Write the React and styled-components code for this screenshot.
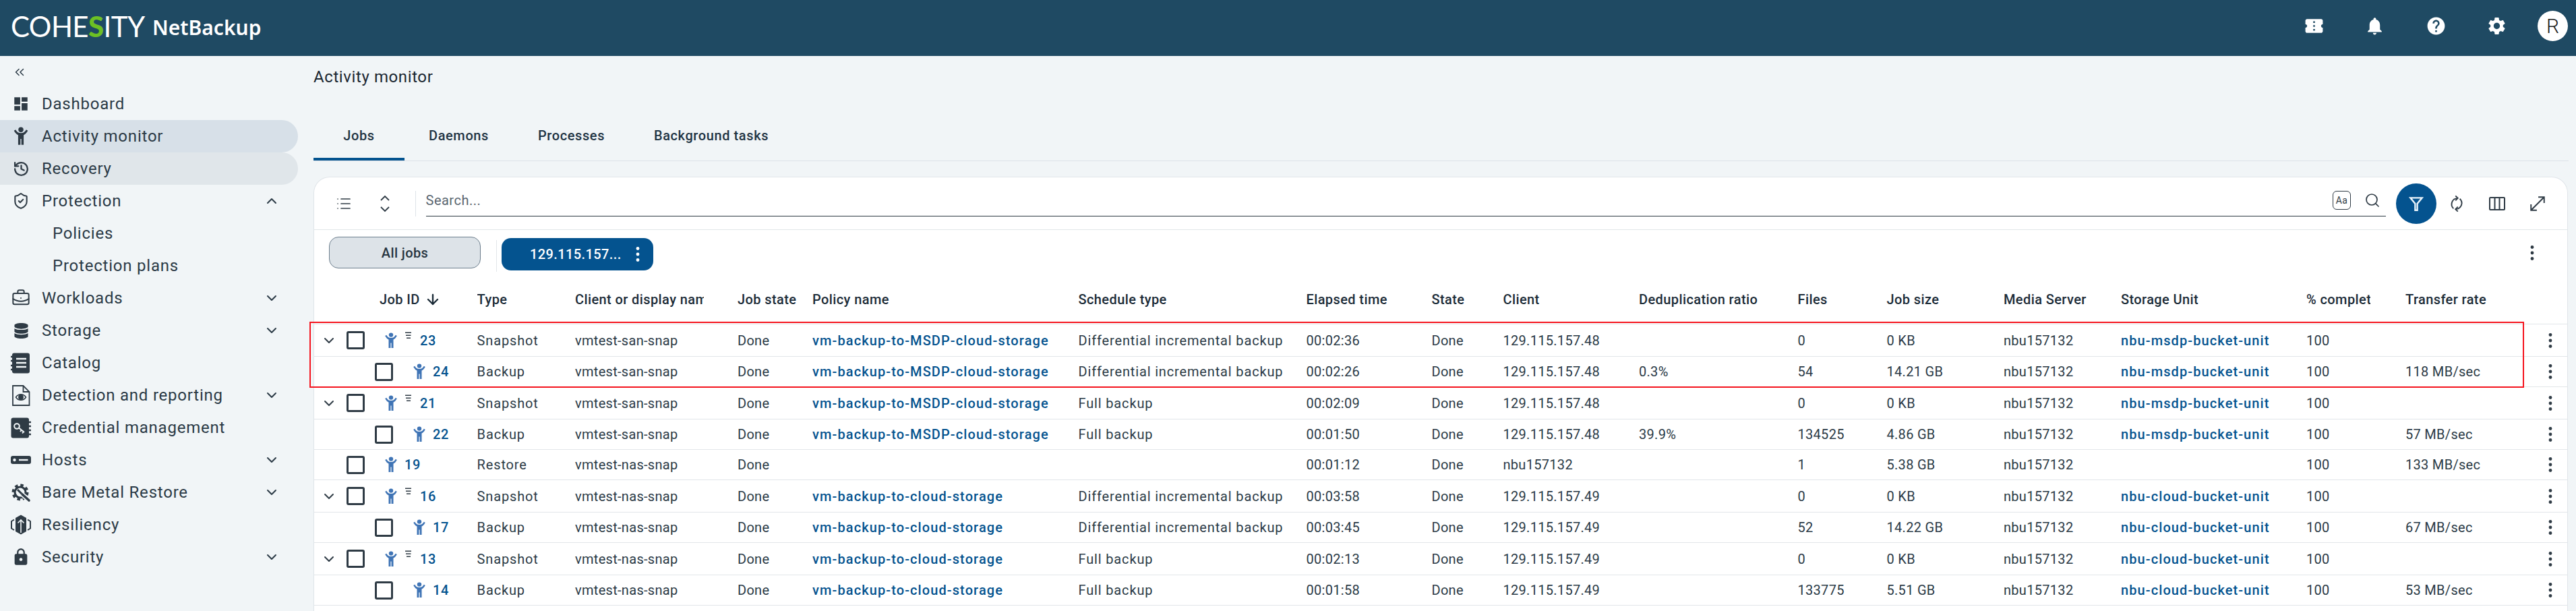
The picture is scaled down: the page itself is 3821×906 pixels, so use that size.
import React from 'react';
import styled, { createGlobalStyle } from 'styled-components';
import {
  ChevronDown, ChevronUp, ChevronsLeft, History, ShieldCheck, BriefcaseBusiness, ArrowDown, List, Search,
} from 'lucide-react';
import { MdConfirmationNumber, MdNotifications, MdHelp, MdSettings, MdDashboard, MdLock } from 'react-icons/md';
import { FaDatabase } from 'react-icons/fa';

const GlobalStyle = createGlobalStyle`
  html, body { margin: 0; padding: 0; height: 100%; overflow: hidden; }
  body { font-family: Roboto, "Liberation Sans", sans-serif; background: #f1f5f7; color: #2b3a46; }
  * { box-sizing: border-box; }
`;

const Page = styled.div`
  height: 100vh;
  display: flex;
  flex-direction: column;
  overflow: hidden;
  position: relative;
`;

// Top bar
const TopBar = styled.header`
  height: 83px;
  flex-shrink: 0;
  background: #1f4a63;
  display: flex;
  align-items: center;
  padding: 0 12px 6px 16px;
  color: #fff;
`;

const Brand = styled.div`
  font-family: Lato, Roboto, sans-serif;
  font-size: 42px;
  font-weight: 400;
  letter-spacing: -0.6px;
  line-height: 1;
  width: 210px;
  white-space: nowrap;
`;

const BrandS = styled.span`
  color: #6cc024;
  font-weight: 900;
`;

const Product = styled.div`
  font-family: "Noto Sans", sans-serif;
  font-size: 30px;
  font-weight: 600;
  white-space: nowrap;
  padding-top: 3px;
`;

const TopActions = styled.div`
  margin-left: auto;
  display: flex;
  align-items: center;
`;

const TopIcon = styled.div`
  width: 90.5px;
  display: flex;
  justify-content: center;
  align-items: center;
  font-size: 31px;
`;

const Avatar = styled.div`
  width: 45px;
  height: 45px;
  border-radius: 50%;
  background: #fff;
  color: #1b1b1b;
  font-size: 30px;
  font-weight: 300;
  display: flex;
  align-items: center;
  justify-content: center;
  margin-left: 15px;
`;

const Body = styled.div`
  flex: 1;
  display: flex;
  min-height: 0;
`;

// Sidebar
const Sidebar = styled.nav`
  width: 465px;
  flex-shrink: 0;
  padding-right: 23px;
`;

const CollapseRow = styled.div`
  height: 47px;
  display: flex;
  align-items: center;
  padding-left: 18px;
  color: #2b3a46;
`;

const NavRow = styled.div`
  height: 48px;
  display: flex;
  align-items: center;
  gap: 16px;
  padding-left: ${p => (p.$sub ? '78px' : '16px')};
  font-size: 24px;
  letter-spacing: 0.78px;
  color: #2b3a46;
  white-space: nowrap;
  border-radius: 0 24px 24px 0;
  background: ${p => p.$bg || 'transparent'};
`;

const NavIcon = styled.span`
  width: 30px;
  height: 32px;
  display: flex;
  align-items: center;
  justify-content: center;
  flex-shrink: 0;
  color: #2f3b45;
`;

const NavCaret = styled.span`
  margin-left: auto;
  margin-right: 27px;
  display: flex;
`;

// Main area
const Main = styled.main`
  flex: 1;
  min-width: 0;
  padding-right: 12px;
  display: flex;
  flex-direction: column;
`;

const PageTitle = styled.h1`
  margin: 0;
  height: 62px;
  padding-top: 12px;
  font-size: 24px;
  line-height: 38px;
  font-weight: 400;
  letter-spacing: 0.6px;
  color: #1b2731;
`;

const Tabs = styled.div`
  display: flex;
  height: 94px;
  flex-shrink: 0;
  border-bottom: 1px solid #dde3e8;
  margin-right: -1px;
`;

const Tab = styled.div`
  height: 93px;
  width: ${p => p.$width}px;
  display: flex;
  align-items: center;
  justify-content: center;
  padding-top: 22px;
  font-size: 20px;
  font-weight: 500;
  letter-spacing: 0.6px;
  color: #1f3444;
  border-bottom: 4px solid ${p => (p.$active ? '#04538f' : 'transparent')};
`;

const Card = styled.section`
  margin-top: 23px;
  flex: 1;
  background: #fff;
  border: 1px solid #e0e5e9;
  border-bottom: none;
  border-radius: 24px 24px 0 0;
  min-height: 0;
`;

const Toolbar = styled.div`
  height: 78px;
  display: flex;
  align-items: center;
  border-bottom: 1px solid #e2e6e9;
  color: #2f3b45;
`;

const ToolGroup = styled.div`
  width: 150.5px;
  height: 38px;
  flex-shrink: 0;
  display: flex;
  align-items: center;
  padding-left: 32px;
  gap: 37px;
  border-right: 1px solid #dde3e8;
`;

const SearchBox = styled.div`
  margin-left: 15px;
  width: 907px;
  flex: 1;
  height: 46px;
  margin-bottom: 8px;
  display: flex;
  align-items: center;
  gap: 20px;
  border-bottom: 1.5px solid #2f3b45;
  padding: 0 8px 0 0;
  font-size: 20px;
  letter-spacing: 0.5px;
  color: #5a6670;
`;

const SearchHint = styled.span`
  flex: 1;
`;

const CaseToggle = styled.span`
  width: 27px;
  height: 28px;
  border: 1.5px solid #2f3b45;
  border-radius: 6px;
  font-size: 14px;
  color: #2f3b45;
  display: flex;
  align-items: center;
  justify-content: center;
`;

const RoundAction = styled.div`
  width: 60px;
  height: 60px;
  flex-shrink: 0;
  border-radius: 50%;
  background: ${p => (p.$active ? '#04538f' : 'transparent')};
  color: ${p => (p.$active ? '#eaf4fb' : '#2f3b45')};
  display: flex;
  align-items: center;
  justify-content: center;
`;

const ActionGroup = styled.div`
  display: flex;
  align-items: center;
  margin-left: 15px;
  margin-right: 14px;
`;

const FilterRow = styled.div`
  height: 62px;
  padding: 10px 40px 0 22px;
  display: flex;
  align-items: flex-start;
`;

const ViewButton = styled.div`
  width: 225px;
  height: 47px;
  border: 1px solid #6b7d8c;
  border-radius: 14px;
  background: #dde3e8;
  display: flex;
  align-items: center;
  justify-content: center;
  font-size: 20px;
  font-weight: 500;
  letter-spacing: 0.4px;
  color: #26343f;
`;

const FilterDivider = styled.div`
  width: 1px;
  height: 47px;
  background: #e2e6e9;
  margin: 5px 7px 0 23px;
`;

const ViewChip = styled.div`
  width: 225px;
  height: 48px;
  margin-top: 2px;
  border-radius: 14px;
  background: #04538f;
  color: #fff;
  display: flex;
  align-items: center;
  padding-left: 42px;
  font-size: 20px;
  font-weight: 500;
  letter-spacing: 0.4px;
`;

const ChipMenu = styled.span`
  margin-left: auto;
  margin-right: 11px;
  display: flex;
`;

const FilterMenu = styled.span`
  margin-left: auto;
  margin-top: 12px;
  color: #2f3b45;
  display: flex;
`;

// Jobs table
const columns = '241.6px 145.4px 241px 111px 394.5px 338px 186px 106px 201.5px 235.5px 132px 173.5px 174px 275px 147px 192px 46px';

const HeaderRow = styled.div`
  display: grid;
  grid-template-columns: ${columns};
  height: 78px;
  align-items: center;
  padding-top: 4px;
  border-bottom: 1px solid #e2e6e9;
  font-size: 20px;
  font-weight: 500;
  letter-spacing: 0.4px;
  color: #1c2c38;
`;

const HeaderCell = styled.div`
  display: flex;
  align-items: center;
  gap: 7px;
  white-space: nowrap;
  overflow: hidden;
  padding-left: ${p => p.$inset || 0}px;
  max-width: ${p => p.$clip || 9999}px;
`;

const Row = styled.div`
  display: grid;
  grid-template-columns: ${columns};
  height: ${p => (p.$tall ? 48 : 45)}px;
  align-items: center;
  border-bottom: 1px solid #e2e6e9;
  font-size: 20px;
  letter-spacing: 0.3px;
  color: #2b3a46;
`;

const Cell = styled.div`
  white-space: nowrap;
  color: ${p => (p.$link ? '#04538f' : 'inherit')};
  font-weight: ${p => (p.$link ? 500 : 400)};
  letter-spacing: ${p => (p.$link ? 1.1 : p.$wide ? 0.85 : 0.3)}px;
`;

const IdCell = styled.div`
  display: flex;
  align-items: center;
  padding-left: ${p => (p.$child ? 90 : 48)}px;
  position: relative;
`;

const Expander = styled.span`
  position: absolute;
  left: 10px;
  top: 50%;
  transform: translateY(-50%);
  display: flex;
  color: #2f3b45;
`;

const Checkbox = styled.span`
  width: 27px;
  height: 27px;
  flex-shrink: 0;
  border: 3px solid #2f3b45;
  border-radius: 3px;
  margin-right: 27px;
`;

const SpawnMark = styled.svg`
  flex-shrink: 0;
  width: 24px;
  height: 24px;
  margin-right: 8px;
  color: #3f74b5;
`;

const ParentMark = styled.svg`
  width: 12px;
  height: 12px;
  flex-shrink: 0;
  margin: -14px 11px 0 0;
  color: #2f3b45;
`;

const JobId = styled.span`
  color: #04538f;
  font-weight: 500;
  letter-spacing: 0.6px;
`;

const KebabCell = styled.div`
  display: flex;
  justify-content: center;
  color: #2f3b45;
`;

const Highlight = styled.div`
  position: absolute;
  left: 459px;
  top: 477px;
  width: 3285px;
  height: 98px;
  border: 2px solid #f5141e;
  pointer-events: none;
`;

const Kebab = ({ size = 24 }) => (
  <svg width={size} height={size} viewBox="0 0 24 24" fill="currentColor">
    <circle cx="12" cy="3.5" r="2.4" />
    <circle cx="12" cy="12" r="2.4" />
    <circle cx="12" cy="20.5" r="2.4" />
  </svg>
);

const personPath = 'M3.2 5l2-1.3C6.7 6.4 8.6 8 12 8s5.3-1.6 6.8-4.3l2 1.3c-1.4 2.7-3.3 4.6-5.3 5.5V23h-2.9v-7.5h-1.2V23H8.5V10.5C6.5 9.6 4.6 7.7 3.2 5z';

const PersonIcon = (props) => (
  <svg viewBox="0 0 24 24" fill="currentColor" {...props}>
    <circle cx="12" cy="3.6" r="3.2" />
    <path d={personPath} />
  </svg>
);

const CatalogIcon = () => (
  <svg width="30" height="31" viewBox="0 0 30 31">
    <rect x="2" y="0.5" width="26" height="30" rx="3" fill="currentColor" />
    <path d="M0 6h3M0 12h3M0 19h3M0 25h3" stroke="currentColor" strokeWidth="2.4" />
    <path d="M8 9h15M8 15h15M8 21h15" stroke="#f1f5f7" strokeWidth="2.4" />
  </svg>
);

const ReportIcon = () => (
  <svg width="28" height="31" viewBox="0 0 28 31" fill="none" stroke="currentColor" strokeWidth="1.8">
    <path d="M2 1h15.5L26.5 10v20H2z" />
    <path d="M17.5 1v9h9" />
    <path d="M6.5 18c2-3 4.800-4.200 7.500-4.200s5.500 1.200 7.500 4.200c-2 3-4.800 4.200-7.500 4.200S8.500 21 6.500 18z" strokeWidth="1.5" />
    <circle cx="14" cy="18" r="3" fill="currentColor" />
  </svg>
);

const KeyBookIcon = () => (
  <svg width="30" height="31" viewBox="0 0 30 31">
    <rect x="0.500" y="0.500" width="26.500" height="30" rx="3" fill="currentColor" />
    <path d="M26 7h4M26 13h4M26 19h4M26 25h4" stroke="currentColor" strokeWidth="2.400" />
    <circle cx="9" cy="13" r="3.800" fill="none" stroke="#f1f5f7" strokeWidth="2" />
    <path d="M12 15.500l8 6.500M16 18.500l-2 2.500M19 21l-2 2.500" stroke="#f1f5f7" strokeWidth="2" fill="none" />
  </svg>
);

const HostIcon = () => (
  <svg width="30" height="12" viewBox="0 0 30 12">
    <rect width="30" height="12" rx="3" fill="currentColor" />
    <circle cx="5.500" cy="6" r="2.200" fill="#f1f5f7" />
    <rect x="12" y="4.800" width="13.500" height="2.400" fill="#f1f5f7" />
  </svg>
);

const RestoreIcon = () => (
  <svg width="30" height="30" viewBox="0 0 30 30" fill="none" stroke="currentColor">
    <circle cx="14" cy="15" r="10" strokeWidth="5" strokeDasharray="4.200 3.650" />
    <circle cx="14" cy="15" r="8" strokeWidth="3.200" />
    <path d="M17 18l10 9" stroke="#f1f5f7" strokeWidth="7" />
    <path d="M17 18l10 9" strokeWidth="3.600" strokeLinecap="round" />
    <path d="M10 11l6 6" strokeWidth="3" />
  </svg>
);

const ResilienceIcon = () => (
  <svg width="30" height="30" viewBox="0 0 30 30" fill="none">
    <path d="M15 0.500L23 5v20l-8 4.500L7 25V5z" fill="currentColor" />
    <path d="M15 27V8M10.500 12.500L15 8l4.500 4.500" stroke="#f1f5f7" strokeWidth="1.600" />
    <path d="M5 7.500L1 10v10.500L5 23M25 7.500L29 10v10.500L25 23" stroke="currentColor" strokeWidth="2" />
  </svg>
);

const navItems = [
  { label: 'Dashboard', icon: <MdDashboard size={26} /> },
  { label: 'Activity monitor', icon: <PersonIcon width={28} height={30} />, bg: '#d7e0e8' },
  { label: 'Recovery', icon: <History size={25} strokeWidth={2.2} />, bg: '#e0e6ea' },
  { label: 'Protection', icon: <ShieldCheck size={26} strokeWidth={1.9} />, caret: 'up' },
  { label: 'Policies', sub: true },
  { label: 'Protection plans', sub: true },
  { label: 'Workloads', icon: <BriefcaseBusiness size={28} strokeWidth={1.7} />, caret: 'down' },
  { label: 'Storage', icon: <FaDatabase size={23} />, caret: 'down' },
  { label: 'Catalog', icon: <CatalogIcon /> },
  { label: 'Detection and reporting', icon: <ReportIcon />, caret: 'down' },
  { label: 'Credential management', icon: <KeyBookIcon /> },
  { label: 'Hosts', icon: <HostIcon />, caret: 'down' },
  { label: 'Bare Metal Restore', icon: <RestoreIcon />, caret: 'down' },
  { label: 'Resiliency', icon: <ResilienceIcon /> },
  { label: 'Security', icon: <MdLock size={28} />, caret: 'down' },
];

const headers = [
  'Type', 'Client or display name', 'Job state', 'Policy name', 'Schedule type', 'Elapsed time', 'State', 'Client',
  'Deduplication ratio', 'Files', 'Job size', 'Media Server', 'Storage Unit', '% complete', 'Transfer rate',
];

const clipped = { 'Client or display name': 191, '% complete': 95 };

const MSDP = 'vm-backup-to-MSDP-cloud-storage';
const CLOUD = 'vm-backup-to-cloud-storage';
const DIFF = 'Differential incremental backup';
const MSDP_UNIT = 'nbu-msdp-bucket-unit';
const CLOUD_UNIT = 'nbu-cloud-bucket-unit';

const jobs = [
  { id: 23, kind: 'parent', type: 'Snapshot', name: 'vmtest-san-snap', policy: MSDP, schedule: DIFF, elapsed: '00:02:36', client: '129.115.157.48', dedup: '', files: '0', size: '0 KB', unit: MSDP_UNIT, rate: '' },
  { id: 24, kind: 'child', type: 'Backup', name: 'vmtest-san-snap', policy: MSDP, schedule: DIFF, elapsed: '00:02:26', client: '129.115.157.48', dedup: '0.3%', files: '54', size: '14.21 GB', unit: MSDP_UNIT, rate: '118 MB/sec' },
  { id: 21, kind: 'parent', type: 'Snapshot', name: 'vmtest-san-snap', policy: MSDP, schedule: 'Full backup', elapsed: '00:02:09', client: '129.115.157.48', dedup: '', files: '0', size: '0 KB', unit: MSDP_UNIT, rate: '' },
  { id: 22, kind: 'child', type: 'Backup', name: 'vmtest-san-snap', policy: MSDP, schedule: 'Full backup', elapsed: '00:01:50', client: '129.115.157.48', dedup: '39.9%', files: '134525', size: '4.86 GB', unit: MSDP_UNIT, rate: '57 MB/sec' },
  { id: 19, kind: 'leaf', type: 'Restore', name: 'vmtest-nas-snap', policy: '', schedule: '', elapsed: '00:01:12', client: 'nbu157132', dedup: '', files: '1', size: '5.38 GB', unit: '', rate: '133 MB/sec' },
  { id: 16, kind: 'parent', type: 'Snapshot', name: 'vmtest-nas-snap', policy: CLOUD, schedule: DIFF, elapsed: '00:03:58', client: '129.115.157.49', dedup: '', files: '0', size: '0 KB', unit: CLOUD_UNIT, rate: '' },
  { id: 17, kind: 'child', type: 'Backup', name: 'vmtest-nas-snap', policy: CLOUD, schedule: DIFF, elapsed: '00:03:45', client: '129.115.157.49', dedup: '', files: '52', size: '14.22 GB', unit: CLOUD_UNIT, rate: '67 MB/sec' },
  { id: 13, kind: 'parent', type: 'Snapshot', name: 'vmtest-nas-snap', policy: CLOUD, schedule: 'Full backup', elapsed: '00:02:13', client: '129.115.157.49', dedup: '', files: '0', size: '0 KB', unit: CLOUD_UNIT, rate: '' },
  { id: 14, kind: 'child', type: 'Backup', name: 'vmtest-nas-snap', policy: CLOUD, schedule: 'Full backup', elapsed: '00:01:58', client: '129.115.157.49', dedup: '', files: '133775', size: '5.51 GB', unit: CLOUD_UNIT, rate: '53 MB/sec' },
];

const JobRow = ({ job }) => (
  <Row $tall={job.kind === 'parent'}>
    <IdCell $child={job.kind === 'child'}>
      {job.kind === 'parent' && <Expander><ChevronDown size={24} strokeWidth={2} /></Expander>}
      <Checkbox />
      <SpawnMark as={PersonIcon} />
      {job.kind === 'parent' && (
        <ParentMark viewBox="0 0 12 12" fill="currentColor">
          <path d="M1 0.500h9V2H1zM2 4.500h7.500V6H2zM3 8.500h6V10H3z" />
        </ParentMark>
      )}
      <JobId>{job.id}</JobId>
    </IdCell>
    <Cell $wide>{job.type}</Cell>
    <Cell>{job.name}</Cell>
    <Cell>Done</Cell>
    <Cell $link>{job.policy}</Cell>
    <Cell $wide>{job.schedule}</Cell>
    <Cell>{job.elapsed}</Cell>
    <Cell>Done</Cell>
    <Cell>{job.client}</Cell>
    <Cell>{job.dedup}</Cell>
    <Cell>{job.files}</Cell>
    <Cell>{job.size}</Cell>
    <Cell>nbu157132</Cell>
    <Cell $link>{job.unit}</Cell>
    <Cell>100</Cell>
    <Cell>{job.rate}</Cell>
    <KebabCell><Kebab /></KebabCell>
  </Row>
);

export default function App() {
  return (
    <Page>
      <GlobalStyle />
      <TopBar>
        <Brand>COHE<BrandS>S</BrandS>ITY</Brand>
        <Product>NetBackup</Product>
        <TopActions>
          <TopIcon><MdConfirmationNumber /></TopIcon>
          <TopIcon><MdNotifications /></TopIcon>
          <TopIcon><MdHelp /></TopIcon>
          <TopIcon><MdSettings /></TopIcon>
          <Avatar>R</Avatar>
        </TopActions>
      </TopBar>
      <Body>
        <Sidebar>
          <CollapseRow><ChevronsLeft size={22} strokeWidth={1.6} /></CollapseRow>
          {navItems.map((item) => (
            <NavRow key={item.label} $sub={item.sub} $bg={item.bg}>
              {item.icon && <NavIcon>{item.icon}</NavIcon>}
              {item.label}
              {item.caret && (
                <NavCaret>
                  {item.caret === 'up' ? <ChevronUp size={24} /> : <ChevronDown size={24} />}
                </NavCaret>
              )}
            </NavRow>
          ))}
        </Sidebar>
        <Main>
          <PageTitle>Activity monitor</PageTitle>
          <Tabs>
            <Tab $active $width={135}>Jobs</Tab>
            <Tab $width={161}>Daemons</Tab>
            <Tab $width={173}>Processes</Tab>
            <Tab $width={242}>Background tasks</Tab>
          </Tabs>
          <Card>
            <Toolbar>
              <ToolGroup>
                <List size={24} strokeWidth={1.7} />
                <svg width="24" height="26" viewBox="0 0 24 26" fill="none" stroke="currentColor" strokeWidth="1.800">
                  <path d="M6 8l6-6 6 6M6 18l6 6 6-6" />
                </svg>
              </ToolGroup>
              <SearchBox>
                <SearchHint>Search...</SearchHint>
                <CaseToggle>Aa</CaseToggle>
                <Search size={24} strokeWidth={1.7} color="#2f3b45" />
              </SearchBox>
              <ActionGroup>
                <RoundAction $active>
                  <svg width="26" height="26" viewBox="0 0 24 24" fill="none" stroke="currentColor" strokeWidth="2.200">
                    <path d="M4 4h16l-6.500 8v9h-3v-9z" />
                  </svg>
                </RoundAction>
                <RoundAction>
                  <svg width="28" height="28" viewBox="0 0 24 24" fill="none" stroke="currentColor" strokeWidth="1.600">
                    <path d="M13 5.200A7.500 7.500 0 0 0 8 18.200M11 18.800A7.500 7.500 0 0 0 16 5.800" />
                    <path d="M10.500 2l3 3-3 3M13.500 16l-3 3 3 3" />
                  </svg>
                </RoundAction>
                <RoundAction>
                  <svg width="26" height="22" viewBox="0 0 26 22" fill="none" stroke="currentColor" strokeWidth="2">
                    <rect x="2" y="2" width="22" height="18" rx="1" />
                    <path d="M9.500 2v18M16.500 2v18" />
                  </svg>
                </RoundAction>
                <RoundAction>
                  <svg width="26" height="26" viewBox="0 0 24 24" fill="none" stroke="currentColor" strokeWidth="1.800">
                    <path d="M3 21L21 3M13 3h8v8M3 13v8h8" />
                  </svg>
                </RoundAction>
              </ActionGroup>
            </Toolbar>
            <FilterRow>
              <ViewButton>All jobs</ViewButton>
              <FilterDivider />
              <ViewChip>
                129.115.157...
                <ChipMenu><Kebab /></ChipMenu>
              </ViewChip>
              <FilterMenu><Kebab /></FilterMenu>
            </FilterRow>
            <HeaderRow>
              <HeaderCell $inset={97}>
                Job ID
                <ArrowDown size={24} strokeWidth={2.4} />
              </HeaderCell>
              {headers.map((h) => (
                <HeaderCell key={h} $clip={clipped[h]}>{h}</HeaderCell>
              ))}
            </HeaderRow>
            {jobs.map((job) => <JobRow key={job.id} job={job} />)}
          </Card>
        </Main>
      </Body>
      <Highlight />
    </Page>
  );
}
